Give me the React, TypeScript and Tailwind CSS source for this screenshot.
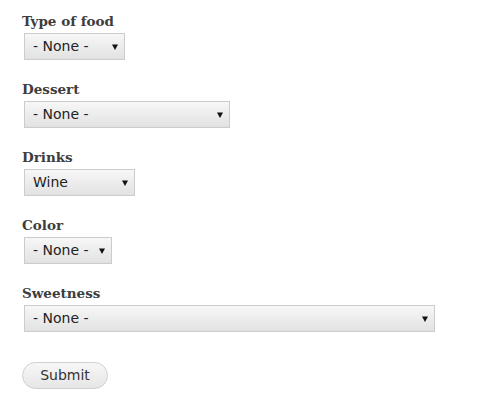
import React from 'react'

type Field = {
  label: string
  value: string
  width: string
}

const fields: Field[] = [
  { label: 'Type of food', value: '- None -', width: 'w-[101px]' },
  { label: 'Dessert', value: '- None -', width: 'w-[206px]' },
  { label: 'Drinks', value: 'Wine', width: 'w-[111px]' },
  { label: 'Color', value: '- None -', width: 'w-[88px]' },
  { label: 'Sweetness', value: '- None -', width: 'w-[411px]' },
]

function Arrow() {
  return (
    <svg width="6" height="6" viewBox="0 0 6 6" className="pointer-events-none absolute right-[7px] top-1/2 -translate-y-1/2">
      <path d="M0 0.5h6L3 6z" fill="#111" />
    </svg>
  )
}

export default function App() {
  return (
    <div className="min-h-screen bg-white px-[22px] pt-[12px] font-['DejaVu_Sans',sans-serif]">
      <form onSubmit={(e) => e.preventDefault()}>
        {fields.map((f) => (
          <div key={f.label} className="mb-[20px]">
            <label className="block font-['DejaVu_Serif',serif] text-[13.5px] font-bold leading-[18px] text-[#3d3d3d]">
              {f.label}
            </label>
            <div className={`relative ml-[2px] mt-[3px] ${f.width}`}>
              <select
                defaultValue={f.value}
                className="block h-[27px] w-full appearance-none border border-[#cccccc] bg-gradient-to-b from-[#f7f7f7] to-[#e2e2e2] pl-[8px] text-[14px] text-[#222]"
              >
                <option>{f.value}</option>
              </select>
              <Arrow />
            </div>
          </div>
        ))}
        <button
          type="submit"
          className="mt-[30px] block h-[27px] w-[86px] rounded-full border border-[#cfcfcf] bg-gradient-to-b from-[#f7f7f7] to-[#e6e6e6] text-[14px] text-[#333]"
        >
          Submit
        </button>
      </form>
    </div>
  )
}
